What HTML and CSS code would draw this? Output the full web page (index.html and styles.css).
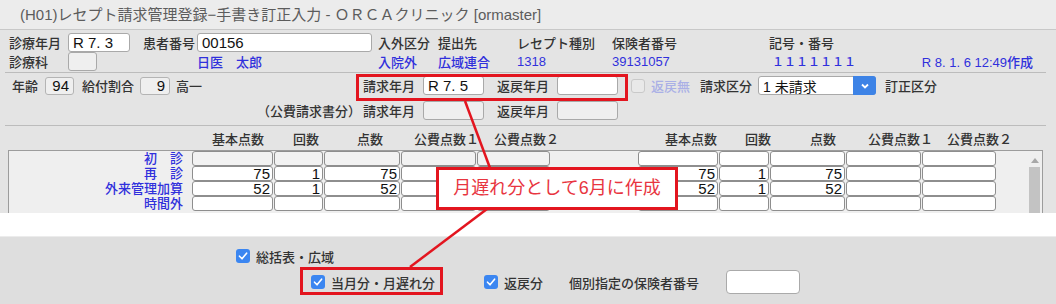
FILE: index.html
```html
<!DOCTYPE html>
<html lang="ja">
<head>
    <meta charset="UTF-8">
    <title>レセプト請求管理登録</title>
    <link rel="stylesheet" href="styles.css">
</head>
<body>
<div class="page">

    <!-- Top window: hand-written correction input -->
    <div class="win-top">
        <div class="titlebar">(H01)レセプト請求管理登録−手書き訂正入力 - ＯＲＣＡクリニック [ormaster]</div>

        <div class="head-grid">
            <span>診療年月</span>
            <span class="fld w62">R 7. 3</span>
            <span>患者番号</span>
            <span class="fld w175">00156</span>
            <span>入外区分</span>
            <span>提出先</span>
            <span>レセプト種別</span>
            <span>保険者番号</span>
            <span>記号・番号</span>

            <span>診療科</span>
            <span class="fld small"></span>
            <span></span>
            <span class="blue">日医　太郎</span>
            <span class="blue">入院外</span>
            <span class="blue">広域連合</span>
            <span class="blue">1318</span>
            <span class="blue">39131057</span>
            <span class="blue split"><span class="ones">１１１１１１１</span><span>R 8. 1. 6 12:49作成</span></span>
        </div>

        <div class="sep"></div>

        <div class="row row3">
            <span class="l-age">年齢</span>
            <span class="box w29">94</span>
            <span class="l-kyufu">給付割合</span>
            <span class="box w30">9</span>
            <span class="l-koichi">高一</span>
            <span class="l60">請求年月</span>
            <span class="fld w61">R 7. 5</span>
            <span class="l60 ml13">返戻年月</span>
            <span class="fld w61"></span>
            <span class="chk-off"></span>
            <span class="l-henrei muted">返戻無</span>
            <span class="l58">請求区分</span>
            <span class="select">1 未請求<span class="sel-btn"><svg width="10" height="8" viewBox="0 0 10 8"><path d="M2 2.5 L5 5.5 L8 2.5" fill="none" stroke="#fff" stroke-width="1.8"/></svg></span></span>
            <span class="ml9">訂正区分</span>
        </div>

        <div class="row row4">
            <span class="l-kohi">（公費請求書分）</span>
            <span class="l60">請求年月</span>
            <span class="fld w61 off"></span>
            <span class="l60 ml13">返戻年月</span>
            <span class="fld w61 off"></span>
        </div>

        <div class="sep sep2"></div>

        <div class="col-head">
            <span class="h81">基本点数</span>
            <span class="h64">回数</span>
            <span class="h57">点数</span>
            <span class="h80">公費点数１</span>
            <span class="h171">公費点数２</span>
            <span class="h80">基本点数</span>
            <span class="h65">回数</span>
            <span class="h58">点数</span>
            <span class="h79">公費点数１</span>
            <span>公費点数２</span>
        </div>

        <div class="panel">
            <div class="rows">
                <div class="trow">
                    <span class="rlabel">初　診</span>
                    <span class="cell c1 grey"></span><span class="cell c2 grey"></span><span class="cell c3 grey"></span><span class="cell c4 grey"></span><span class="cell c5 grey"></span>
                    <span class="gutter"></span>
                    <span class="cell d1"></span><span class="cell d2"></span><span class="cell d3"></span><span class="cell d4"></span><span class="cell d5"></span>
                </div>
                <div class="trow">
                    <span class="rlabel">再　診</span>
                    <span class="cell c1">75</span><span class="cell c2">1</span><span class="cell c3">75</span><span class="cell c4"></span><span class="cell c5"></span>
                    <span class="gutter"></span>
                    <span class="cell d1">75</span><span class="cell d2">1</span><span class="cell d3">75</span><span class="cell d4"></span><span class="cell d5"></span>
                </div>
                <div class="trow">
                    <span class="rlabel">外来管理加算</span>
                    <span class="cell c1">52</span><span class="cell c2">1</span><span class="cell c3">52</span><span class="cell c4"></span><span class="cell c5"></span>
                    <span class="gutter"></span>
                    <span class="cell d1">52</span><span class="cell d2">1</span><span class="cell d3">52</span><span class="cell d4"></span><span class="cell d5"></span>
                </div>
                <div class="trow">
                    <span class="rlabel">時間外</span>
                    <span class="cell c1"></span><span class="cell c2"></span><span class="cell c3"></span><span class="cell c4"></span><span class="cell c5"></span>
                    <span class="gutter"></span>
                    <span class="cell d1"></span><span class="cell d2"></span><span class="cell d3"></span><span class="cell d4"></span><span class="cell d5"></span>
                </div>
            </div>
            <div class="scroll">
                <div class="sbar">
                    <span class="arrow"></span>
                    <span class="thumb"></span>
                </div>
            </div>
        </div>
    </div>

    <!-- Bottom window: print options -->
    <div class="win-bottom">
        <div class="brow brow1">
            <span class="chk"><svg width="14" height="14" viewBox="0 0 14 14"><path d="M3.5 7.2 L6 9.8 L10.6 4.2" fill="none" stroke="#fff" stroke-width="1.6" stroke-linecap="round" stroke-linejoin="round"/></svg></span>
            <span class="ctext">総括表・広域</span>
        </div>
        <div class="brow brow2">
            <span class="chk"><svg width="14" height="14" viewBox="0 0 14 14"><path d="M3.5 7.2 L6 9.8 L10.6 4.2" fill="none" stroke="#fff" stroke-width="1.6" stroke-linecap="round" stroke-linejoin="round"/></svg></span>
            <span class="ctext w159">当月分・月遅れ分</span>
            <span class="chk"><svg width="14" height="14" viewBox="0 0 14 14"><path d="M3.5 7.2 L6 9.8 L10.6 4.2" fill="none" stroke="#fff" stroke-width="1.6" stroke-linecap="round" stroke-linejoin="round"/></svg></span>
            <span class="ctext w71">返戻分</span>
            <span class="w157">個別指定の保険者番号</span>
            <span class="fld-b"></span>
        </div>
    </div>

    <!-- Annotation marks -->
    <svg class="marks" width="1056" height="304" viewBox="0 0 1056 304">
        <rect x="357.5" y="75.5" width="269" height="24" fill="none" stroke="#e3151f" stroke-width="3"/>
        <rect x="301.5" y="268.5" width="140" height="25" fill="none" stroke="#e3151f" stroke-width="3"/>
        <line x1="465" y1="101" x2="490" y2="168" stroke="#e3151f" stroke-width="2.5"/>
        <line x1="487" y1="209" x2="410" y2="267" stroke="#e3151f" stroke-width="2.5"/>
    </svg>
    <div class="callout">月遅れ分として6月に作成</div>
</div>
</body>
</html>
```

FILE: styles.css
```css
* {
    box-sizing: border-box;
}

body {
    margin: 0;
    background: #fff;
    font-family: "Liberation Sans", "Noto Sans CJK JP", sans-serif;
    font-size: 13px;
    font-weight: 500;
    color: #333;
}

.page {
    position: relative;
    width: 1056px;
    height: 304px;
    overflow: hidden;
}

/* --- Top window --- */
.win-top {
    height: 213px;
    background: #e4e4e4;
    overflow: hidden;
}

.titlebar {
    height: 30px;
    background: #ececec;
    border-bottom: 1px solid #c8c8c8;
    padding-left: 20px;
    font-size: 15px;
    font-weight: 400;
    line-height: 29px;
    color: #5c5c5c;
}

.head-grid {
    display: grid;
    grid-template-columns: 59px 75px 54px 181px 60px 79px 95px 157px 1fr;
    grid-template-rows: 19px 19px;
    align-items: center;
    width: 1024px;
    margin: 3px 0 0 9px;
    white-space: nowrap;
}

.blue { color: #3030dc; }
.muted { color: #aab0e6; }

.split {
    display: flex;
    justify-content: space-between;
}
.ones {
    padding-left: 3px;
    font-size: 12px;
}

.fld {
    display: inline-block;
    height: 19px;
    background: #fff;
    border: 1px solid #a9a9a9;
    border-radius: 3px;
    padding: 0 4px;
    font-size: 15px;
    font-weight: 400;
    line-height: 17px;
    color: #111;
}
.fld.small {
    width: 29px;
    background: #efefef;
}
.fld.off { background: #efefef; }
.w62 { width: 62px; }
.w175 { width: 175px; }
.w61 { width: 61px; }

.sep {
    height: 1px;
    margin: 1px 10px 0 5px;
    background: #bcbcbc;
}
.sep2 { margin-top: 2px; }

.row {
    display: flex;
    align-items: center;
    white-space: nowrap;
}
.row3 { height: 25px; }
.row4 { height: 25px; }

.l-age { width: 45px; padding-left: 12px; }
.l-kyufu { width: 66px; padding-left: 8px; }
.l-koichi { width: 193px; padding-left: 6px; }
.l-kohi { width: 363px; padding-left: 257px; }
.l-henrei { width: 55px; padding-left: 6px; }
.l60 { width: 60px; }
.l58 { width: 58px; }
.ml13 { margin-left: 13px; }
.ml9 { margin-left: 9px; }

.box {
    display: inline-block;
    height: 18px;
    background: #efefef;
    border: 1px solid #b4b4b4;
    border-radius: 3px;
    padding-right: 4px;
    text-align: right;
    font-size: 15px;
    font-weight: 400;
    line-height: 16px;
    color: #111;
}
.w29 { width: 29px; }
.w30 { width: 30px; }

.chk-off {
    width: 14px;
    height: 14px;
    margin-left: 13px;
    border: 1px solid #c9c9c9;
    border-radius: 3px;
    background: #e9e9e9;
}

.select {
    display: flex;
    align-items: center;
    position: relative;
    width: 118px;
    height: 19px;
    background: #fff;
    border: 1px solid #a9a9a9;
    border-radius: 3px;
    padding-left: 4px;
    font-size: 14px;
    font-weight: 400;
    color: #111;
}
.sel-btn {
    display: flex;
    align-items: center;
    justify-content: center;
    position: absolute;
    top: -1px;
    right: -1px;
    width: 23px;
    height: 19px;
    background: #3d83e6;
    border-radius: 0 3px 3px 0;
}

/* --- Column headings --- */
.col-head {
    display: flex;
    align-items: center;
    height: 24px;
    padding-left: 212px;
    white-space: nowrap;
}
.h81 { width: 81px; }
.h64 { width: 64px; }
.h57 { width: 57px; }
.h80 { width: 80px; }
.h171 { width: 171px; }
.h65 { width: 65px; }
.h58 { width: 58px; }
.h79 { width: 79px; }

/* --- Point table --- */
.panel {
    display: flex;
    width: 1035px;
    height: 70px;
    margin-left: 8px;
    background: #efefef;
    border: 1px solid #9c9c9c;
    border-bottom: none;
}

.trow {
    display: flex;
    height: 15px;
}

.rlabel {
    width: 174px;
    margin-right: 9px;
    text-align: right;
    color: #3030dc;
    line-height: 15px;
}

.cell {
    display: inline-block;
    height: 15px;
    margin-right: 1px;
    background: #fff;
    border: 1px solid #8e8e8e;
    border-radius: 3px;
    padding-right: 2px;
    text-align: right;
    font-size: 15px;
    font-weight: 400;
    line-height: 13px;
    color: #111;
}
.cell.grey { background: #f2f2f2; }
.c1 { width: 81px; }
.c2 { width: 49px; }
.c3 { width: 76px; }
.c4 { width: 75px; }
.c5 { width: 73px; }
.gutter { width: 87px; }
.d1 { width: 80px; }
.d2 { width: 50px; }
.d3 { width: 75px; }
.d4 { width: 75px; }
.d5 { width: 74px; }

.scroll {
    flex: 1;
    display: flex;
    justify-content: flex-end;
    padding-right: 1px;
}
.sbar {
    display: flex;
    flex-direction: column;
    align-items: center;
    width: 13px;
}
.arrow {
    margin-top: 7px;
    width: 0;
    height: 0;
    border-left: 4px solid transparent;
    border-right: 4px solid transparent;
    border-bottom: 5px solid #a8a8a8;
}
.thumb {
    margin-top: 4px;
    width: 11px;
    height: 60px;
    background: #c3c3c3;
}

/* --- Bottom window --- */
.win-bottom {
    height: 68px;
    margin-top: 23px;
    background: #dedede;
    border-top: 1px solid #ececec;
}

.brow {
    display: flex;
    align-items: center;
    white-space: nowrap;
}
.brow1 {
    height: 14px;
    margin-top: 12px;
    padding-left: 236px;
}
.brow2 {
    height: 24px;
    margin-top: 7px;
    padding-left: 311px;
}

.chk {
    display: flex;
    width: 14px;
    height: 14px;
    background: #3b86f1;
    border-radius: 3px;
}
.ctext { padding-left: 6px; }
.w159 { width: 159px; }
.w71 { width: 71px; }
.w157 { width: 157px; }

.fld-b {
    width: 74px;
    height: 24px;
    background: #fff;
    border: 1px solid #aaa;
    border-radius: 4px;
}

/* --- Annotations --- */
.marks {
    position: absolute;
    left: 0;
    top: 0;
    pointer-events: none;
}

.callout {
    position: absolute;
    left: 436px;
    top: 167px;
    width: 242px;
    height: 43px;
    background: #fff;
    border: 3px solid #e3151f;
    text-align: center;
    font-size: 18px;
    font-weight: 400;
    line-height: 36px;
    color: #e8353f;
}
```
